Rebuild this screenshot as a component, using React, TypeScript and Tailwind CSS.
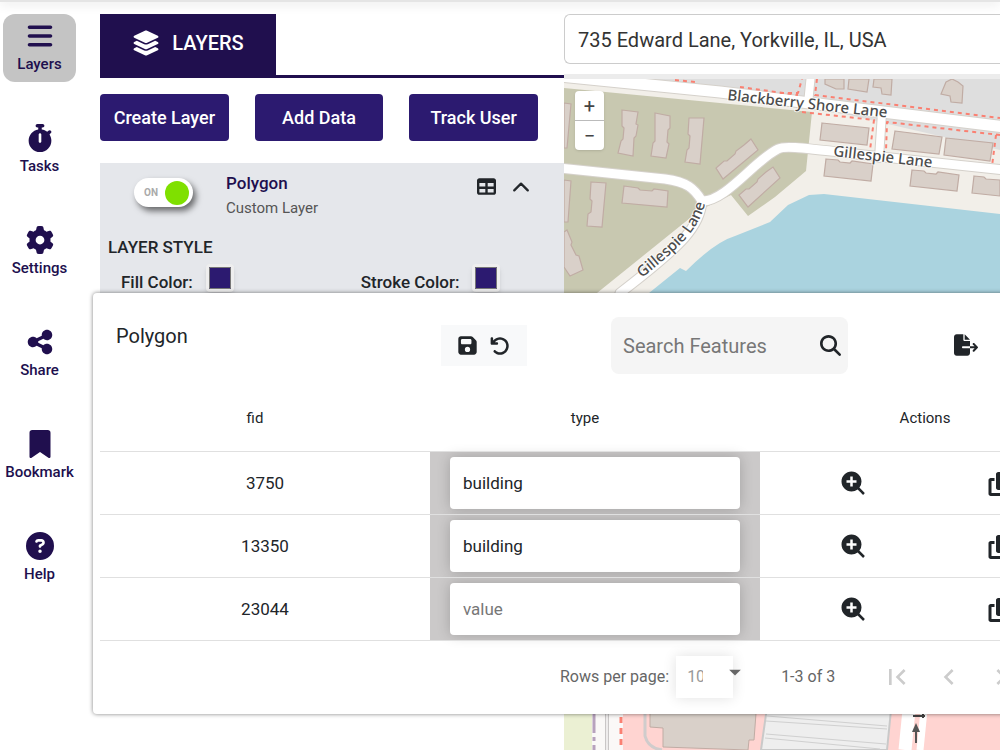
import React from 'react';
import {
  FaArrowRotateLeft,
  FaBars,
  FaBookmark,
  FaCircleQuestion,
  FaCopy,
  FaFileExport,
  FaFloppyDisk,
  FaGear,
  FaLayerGroup,
  FaMagnifyingGlass,
  FaShareNodes,
  FaStopwatch,
  FaTable,
} from 'react-icons/fa6';
import { BiSolidZoomIn } from 'react-icons/bi';
import { BsChevronUp } from 'react-icons/bs';
import { MdArrowDropDown, MdChevronLeft, MdChevronRight, MdFirstPage } from 'react-icons/md';

const navItems = [
  { label: 'Layers', icon: FaBars, active: true },
  { label: 'Tasks', icon: FaStopwatch },
  { label: 'Settings', icon: FaGear },
  { label: 'Share', icon: FaShareNodes },
  { label: 'Bookmark', icon: FaBookmark },
  { label: 'Help', icon: FaCircleQuestion },
];

const features = [
  { fid: 3750, type: 'building' },
  { fid: 13350, type: 'building' },
  { fid: 23044, type: '' },
];

const Sidebar: React.FC = () => (
  <nav className="flex w-25 shrink-0 flex-col gap-[34px] pl-[3px] pt-3">
    {navItems.map(({ label, icon: Icon, active }) => (
      <button
        key={label}
        className={`flex h-[68px] w-[73px] flex-col items-center gap-1 rounded-xl pt-2 text-[15px] leading-5 font-medium text-[#200f4e] ${
          active ? 'bg-[#c4c4c4]' : ''
        }`}
      >
        <Icon className="size-7" />
        {label}
      </button>
    ))}
  </nav>
);

const ColorField: React.FC<{ label: string }> = ({ label }) => (
  <label className="flex items-start gap-[13px] text-[17px] leading-9 font-medium">
    {label}
    <input
      type="color"
      defaultValue="#2c1a70"
      className="size-7 appearance-none rounded-sm border-[3px] border-[#eeeeee] bg-[#2c1a70] p-0 shadow-md [&::-webkit-color-swatch]:border-[#777777] [&::-webkit-color-swatch-wrapper]:p-0"
    />
  </label>
);

const LayerPanel: React.FC = () => (
  <section className="w-116 shrink-0 pt-3 text-[#212529]">
    <div className="flex border-b-[3px] border-[#200f4e]">
      <h1 className="flex h-[61px] w-44 items-center justify-center gap-3 bg-[#200f4e] pb-1 text-xl font-medium text-white">
        <FaLayerGroup className="size-7" />
        LAYERS
      </h1>
    </div>
    <div className="flex gap-[26px] pt-4 pr-[26px]">
      {['Create Layer', 'Add Data', 'Track User'].map((name) => (
        <button key={name} className="h-[47px] flex-1 rounded bg-[#2c1a70] text-lg font-medium text-white">
          {name}
        </button>
      ))}
    </div>
    <div className="mt-[22px] h-100 bg-[#e5e7eb]">
      <div className="flex items-start pt-2 pr-[34px]">
        <button
          role="switch"
          aria-checked="true"
          className="mt-[7px] ml-[34px] flex h-[29px] w-[59px] items-center justify-between rounded-full bg-white pr-1 pl-[10px] text-[10px] font-bold text-[#aaaaaa] shadow-[3px_4px_6px_rgba(0,0,0,0.55)]"
        >
          ON
          <span className="size-6 rounded-full bg-[#7fe000]" />
        </button>
        <div className="ml-[33px] flex-1 leading-[25px]">
          <h2 className="text-[17px] font-medium text-[#200f4e]">Polygon</h2>
          <p className="text-[15px] text-[#555555]">Custom Layer</p>
        </div>
        <div className="flex gap-4 pt-[6px]">
          <button aria-label="Attribute table">
            <FaTable className="size-[19px]" />
          </button>
          <button aria-label="Collapse">
            <BsChevronUp className="size-[18px] stroke-1" />
          </button>
        </div>
      </div>
      <h3 className="px-2 pt-[10px] text-[17px] leading-8 font-medium">LAYER STYLE</h3>
      <div className="flex gap-[127px] pt-px pl-[21px]">
        <ColorField label="Fill Color:" />
        <ColorField label="Stroke Color:" />
      </div>
    </div>
  </section>
);

const StreetMap: React.FC = () => (
  <svg className="h-full w-full" viewBox="564 79 436 671" preserveAspectRatio="xMinYMin slice" aria-label="Map">
    <defs>
      <path id="blackberry" d="M727 100 L900 119" />
      <path id="gillespie-east" d="M833 156 L945 169" />
      <path id="gillespie-west" d="M642 278 C678 248 703 230 707 192" />
    </defs>
    <rect x="564" y="79" width="436" height="671" fill="#f2efe9" />
    <path d="M625 79H1000V150L780 99Z" fill="#dedede" />
    <path d="M564 88L812 112L806 171L775 197L748 216L731 195L700 210L597 293H564Z" fill="#c8c8b0" />
    <path d="M649 293L680 268L686 271Q715 242 735 236L770 222L788 205L809 195L824 194L1000 214V293Z" fill="#aad3df" />

    {/* Roads */}
    <g fill="none" strokeLinecap="round" strokeLinejoin="round">
      {[
        { stroke: '#d5d1cb', extra: 2 },
        { stroke: '#ffffff', extra: 0 },
      ].map(({ stroke, extra }) => (
        <g key={stroke} stroke={stroke}>
          <path d="M560 76L720 92L1005 127" strokeWidth={11 + extra} />
          <path d="M560 168L665 179C687 182 694 188 702 201C725 202 755 160 778 149C788 144 808 150 1005 170" strokeWidth={9 + extra} />
          <path d="M702 201C700 226 684 244 620 293" strokeWidth={9 + extra} />
          <path d="M811 74L808 104M882 113L879 158" strokeWidth={8 + extra} />
        </g>
      ))}
      <path
        d="M675 80L695 82M740 87L798 95M780 93H798L802 79M817 79L815 95L1000 118M802 112L874 120L870 150M1000 135L887 122L886 151M996 135L992 166"
        stroke="#fa8072"
        strokeWidth="2"
        strokeDasharray="4 4"
        strokeLinecap="butt"
      />
    </g>

    {/* Buildings */}
    <g fill="#d9d0c9" stroke="#c0aca4" strokeWidth="1.2">
      <path d="M622 110l16 2l-2 12l2 1l-2 11l-2 2l-1 18l-15-3l3-12l2-2l1-11l-2-2Z" />
      <path d="M655 113l15 3l0 12l-2 2l-1 12l2 2l-3 14l-15-2l2-13l2-2Z" />
      <path d="M689 118h15l-4 46l-15-2l2-12l2-2l1-12l-2-2Z" />
      <path d="M564 103l7 1l-4 44h-3Z" />
      <path d="M751 139l7 11l-35 29l-7-11l8-7l3 0l8-7l1-3l8-6Z" />
      <path d="M773 167l7 11l-32 29l-9-12l7-6l3 0l8-7l1-3l8-7Z" />
      <path d="M591 182l15 1l-4 44l-15-1l1-12l3-2l1-11l-2-2Z" />
      <path d="M624 186l14 2l2 2l12 1l2-2l14 2l-1 16l-45-4Z" />
      <path d="M564 180l7 1l-3 41h-4Z" />
      <path d="M564 232l3-2l5 12l-1 3l5 10l3 1l4 14l-13 6l-6-9Z" />
      <path d="M822 123l47 5l-2 17l-47-5Z" />
      <path d="M895 131l47 6l-3 17l-47-5Z" />
      <path d="M946 138l47 5l-3 18l-46-6Z" />
      <path d="M826 159l12 1l2 2l10 1l2-2l21 3l-2 17l-47-5Z" />
      <path d="M912 170l12 1l2 2l10 1l2-2l21 3l-2 16l-47-5Z" />
      <path d="M974 176l10 1l2 2l14 1v16l-28-3Z" />
      <path d="M825 79h19v10l-8 0l-11-5ZM849 79h20l-2 13l-19-3ZM874 79h18l-1 16l-9-1l-1-6l-8-1Z" />
      <path d="M946 82l6-3l6 3l5 4l-1 17l-11-1l-1-6l-9-2Z" />
    </g>

    <g
      fill="#4c4c4c"
      stroke="#ffffff"
      strokeOpacity="0.7"
      strokeWidth="2"
      paintOrder="stroke"
      className="font-['Noto_Sans',sans-serif] text-[15px] font-medium"
    >
      <text>
        <textPath href="#blackberry">Blackberry Shore Lane</textPath>
      </text>
      <text>
        <textPath href="#gillespie-east">Gillespie Lane</textPath>
      </text>
      <text>
        <textPath href="#gillespie-west">Gillespie Lane</textPath>
      </text>
    </g>

    {/* Shopping area south of the lake */}
    <rect x="564" y="700" width="28" height="50" fill="#ebf0d3" />
    <rect x="592" y="700" width="31" height="50" fill="#faf8f7" />
    <path d="M594 700V733M594 737V741M594 745V750" stroke="#b7a2bd" strokeWidth="3" />
    <path d="M607 700V750" stroke="#c9c6c6" strokeWidth="4" />
    <path d="M607 700V750" stroke="#eeecec" strokeWidth="2" />
    <path d="M621 717V750" stroke="#fa8072" strokeWidth="3" strokeDasharray="6 5" />
    <rect x="623" y="700" width="377" height="50" fill="#ffd4d1" />
    <path d="M645 700V736Q648 748 662 750" fill="none" stroke="#d0cccc" strokeWidth="3" />
    <path d="M650 700H757L754 740H749L748 750L663 747V728L650 727Z" fill="#d9d0c9" stroke="#c0aca4" />
    <path d="M768 700H892L887 750H761Z" fill="#eeeeee" stroke="#c9c9c9" strokeWidth="2" />
    <path d="M767 716L887 726M766 721L887 729M766 734L886 744M765 738L880 749" stroke="#d0d0d0" />
    <path d="M910 700L905 750" stroke="#ffffff" strokeWidth="13" />
    <path d="M925 700L920 750" stroke="#ffffff" strokeWidth="7" />
    <path d="M916 743V729" stroke="#555555" strokeWidth="2" />
    <path d="M916 723l4 9h-8Z" fill="#555555" />
    <path d="M913 716H925M923 712V718" stroke="#444444" strokeWidth="2" />
  </svg>
);

const MapArea: React.FC = () => (
  <main className="flex min-w-0 flex-1 flex-col pt-3">
    <input
      type="text"
      aria-label="Address"
      defaultValue="735 Edward Lane, Yorkville, IL, USA"
      className="h-[50px] w-full shrink-0 rounded-l-md border border-r-0 border-[#cccccc] bg-white px-[13px] pt-[2px] text-xl text-[#333333]"
    />
    <div className="relative mt-[10px] min-h-0 flex-1 border-t-[5px] border-[#ececec]">
      <StreetMap />
      <div className="absolute top-3 left-[11px] flex w-[29px] flex-col divide-y divide-[#bbbbbb] rounded-sm bg-white text-xl leading-none text-[#444444] shadow">
        <button aria-label="Zoom in" className="h-[30px] pt-px">
          +
        </button>
        <button aria-label="Zoom out" className="h-[29px] pt-px">
          −
        </button>
      </div>
    </div>
  </main>
);

const FeatureTable: React.FC = () => (
  <table className="w-full table-fixed text-center text-[17px]">
    <thead>
      <tr className="h-[66px] border-b border-[#e0e0e0] text-[15px]">
        <th className="pr-5 font-normal">fid</th>
        <th className="pr-5 font-normal">type</th>
        <th className="font-normal">Actions</th>
      </tr>
    </thead>
    <tbody>
      {features.map(({ fid, type }) => (
        <tr key={fid} className="h-[63px] border-b border-[#e0e0e0]">
          <td className="pt-[2px]">{fid}</td>
          <td className="bg-[#cbc9c9] px-5">
            <input
              type="text"
              aria-label={`Type of ${fid}`}
              defaultValue={type}
              placeholder="value"
              className="block h-[52px] w-full rounded bg-white px-[13px] text-[#212529] shadow-[0_0_14px_rgba(0,0,0,0.2)] placeholder:text-[#777777]"
            />
          </td>
          <td className="pt-[2px]">
            <div className="flex items-center justify-around px-5">
              <button aria-label="Zoom to feature">
                <BiSolidZoomIn className="size-[30px]" />
              </button>
              <button aria-label="Copy feature">
                <FaCopy className="size-6" />
              </button>
            </div>
          </td>
        </tr>
      ))}
    </tbody>
  </table>
);

const AttributeWindow: React.FC = () => (
  <section className="absolute top-[293px] left-[93px] w-full min-w-[1004px] rounded bg-white px-[7px] text-[#212529] shadow-[0_0_4px_rgba(0,0,0,0.5)]">
    <div className="flex h-[92px] items-start pt-6">
      <h2 className="w-[341px] pt-[3px] pl-4 text-xl leading-8">Polygon</h2>
      <div className="mt-2 flex h-[41px] w-[86px] items-center justify-center gap-3 bg-[#f8f9fa] pr-[2px]">
        <button aria-label="Save">
          <FaFloppyDisk className="size-[21px]" />
        </button>
        <button aria-label="Undo">
          <FaArrowRotateLeft className="size-5" />
        </button>
      </div>
      <div className="ml-[84px] flex h-[57px] w-[237px] items-center rounded-lg bg-[#f5f5f5] pr-[7px] pl-3">
        <input
          type="search"
          aria-label="Search Features"
          placeholder="Search Features"
          className="min-w-0 flex-1 text-xl placeholder:text-[#777777]"
        />
        <button aria-label="Search">
          <FaMagnifyingGlass className="size-[21px]" />
        </button>
      </div>
      <button aria-label="Export" className="mt-4 ml-[106px]">
        <FaFileExport className="size-6" />
      </button>
    </div>
    <FeatureTable />
    <footer className="flex h-[73px] items-center pl-[460px] text-base text-[#666666]">
      <label htmlFor="rows">Rows per page:</label>
      <div className="relative ml-[7px] flex items-center">
        <select
          id="rows"
          className="h-[42px] w-[57px] appearance-none bg-white pr-[30px] pl-[11px] text-base text-[#999999] shadow-[0_0_14px_rgba(0,0,0,0.12)]"
        >
          <option>10</option>
        </select>
        <MdArrowDropDown className="pointer-events-none absolute -right-4 bottom-3 size-7" />
      </div>
      <span className="ml-12">1-3 of 3</span>
      <div className="ml-[46px] flex gap-5 text-[#cccccc]">
        <button aria-label="First page">
          <MdFirstPage className="size-8" />
        </button>
        <button aria-label="Previous page">
          <MdChevronLeft className="size-8" />
        </button>
        <button aria-label="Next page">
          <MdChevronRight className="size-8" />
        </button>
      </div>
    </footer>
  </section>
);

export default function App() {
  return (
    <div className="relative flex h-screen flex-col overflow-hidden bg-white font-[Roboto,sans-serif]">
      <header className="h-[2px] shrink-0 bg-[#e5e5e5] shadow-[0_0_12px_rgba(0,0,0,0.3)]" />
      <div className="flex min-h-0 flex-1">
        <Sidebar />
        <LayerPanel />
        <MapArea />
      </div>
      <AttributeWindow />
    </div>
  );
}
